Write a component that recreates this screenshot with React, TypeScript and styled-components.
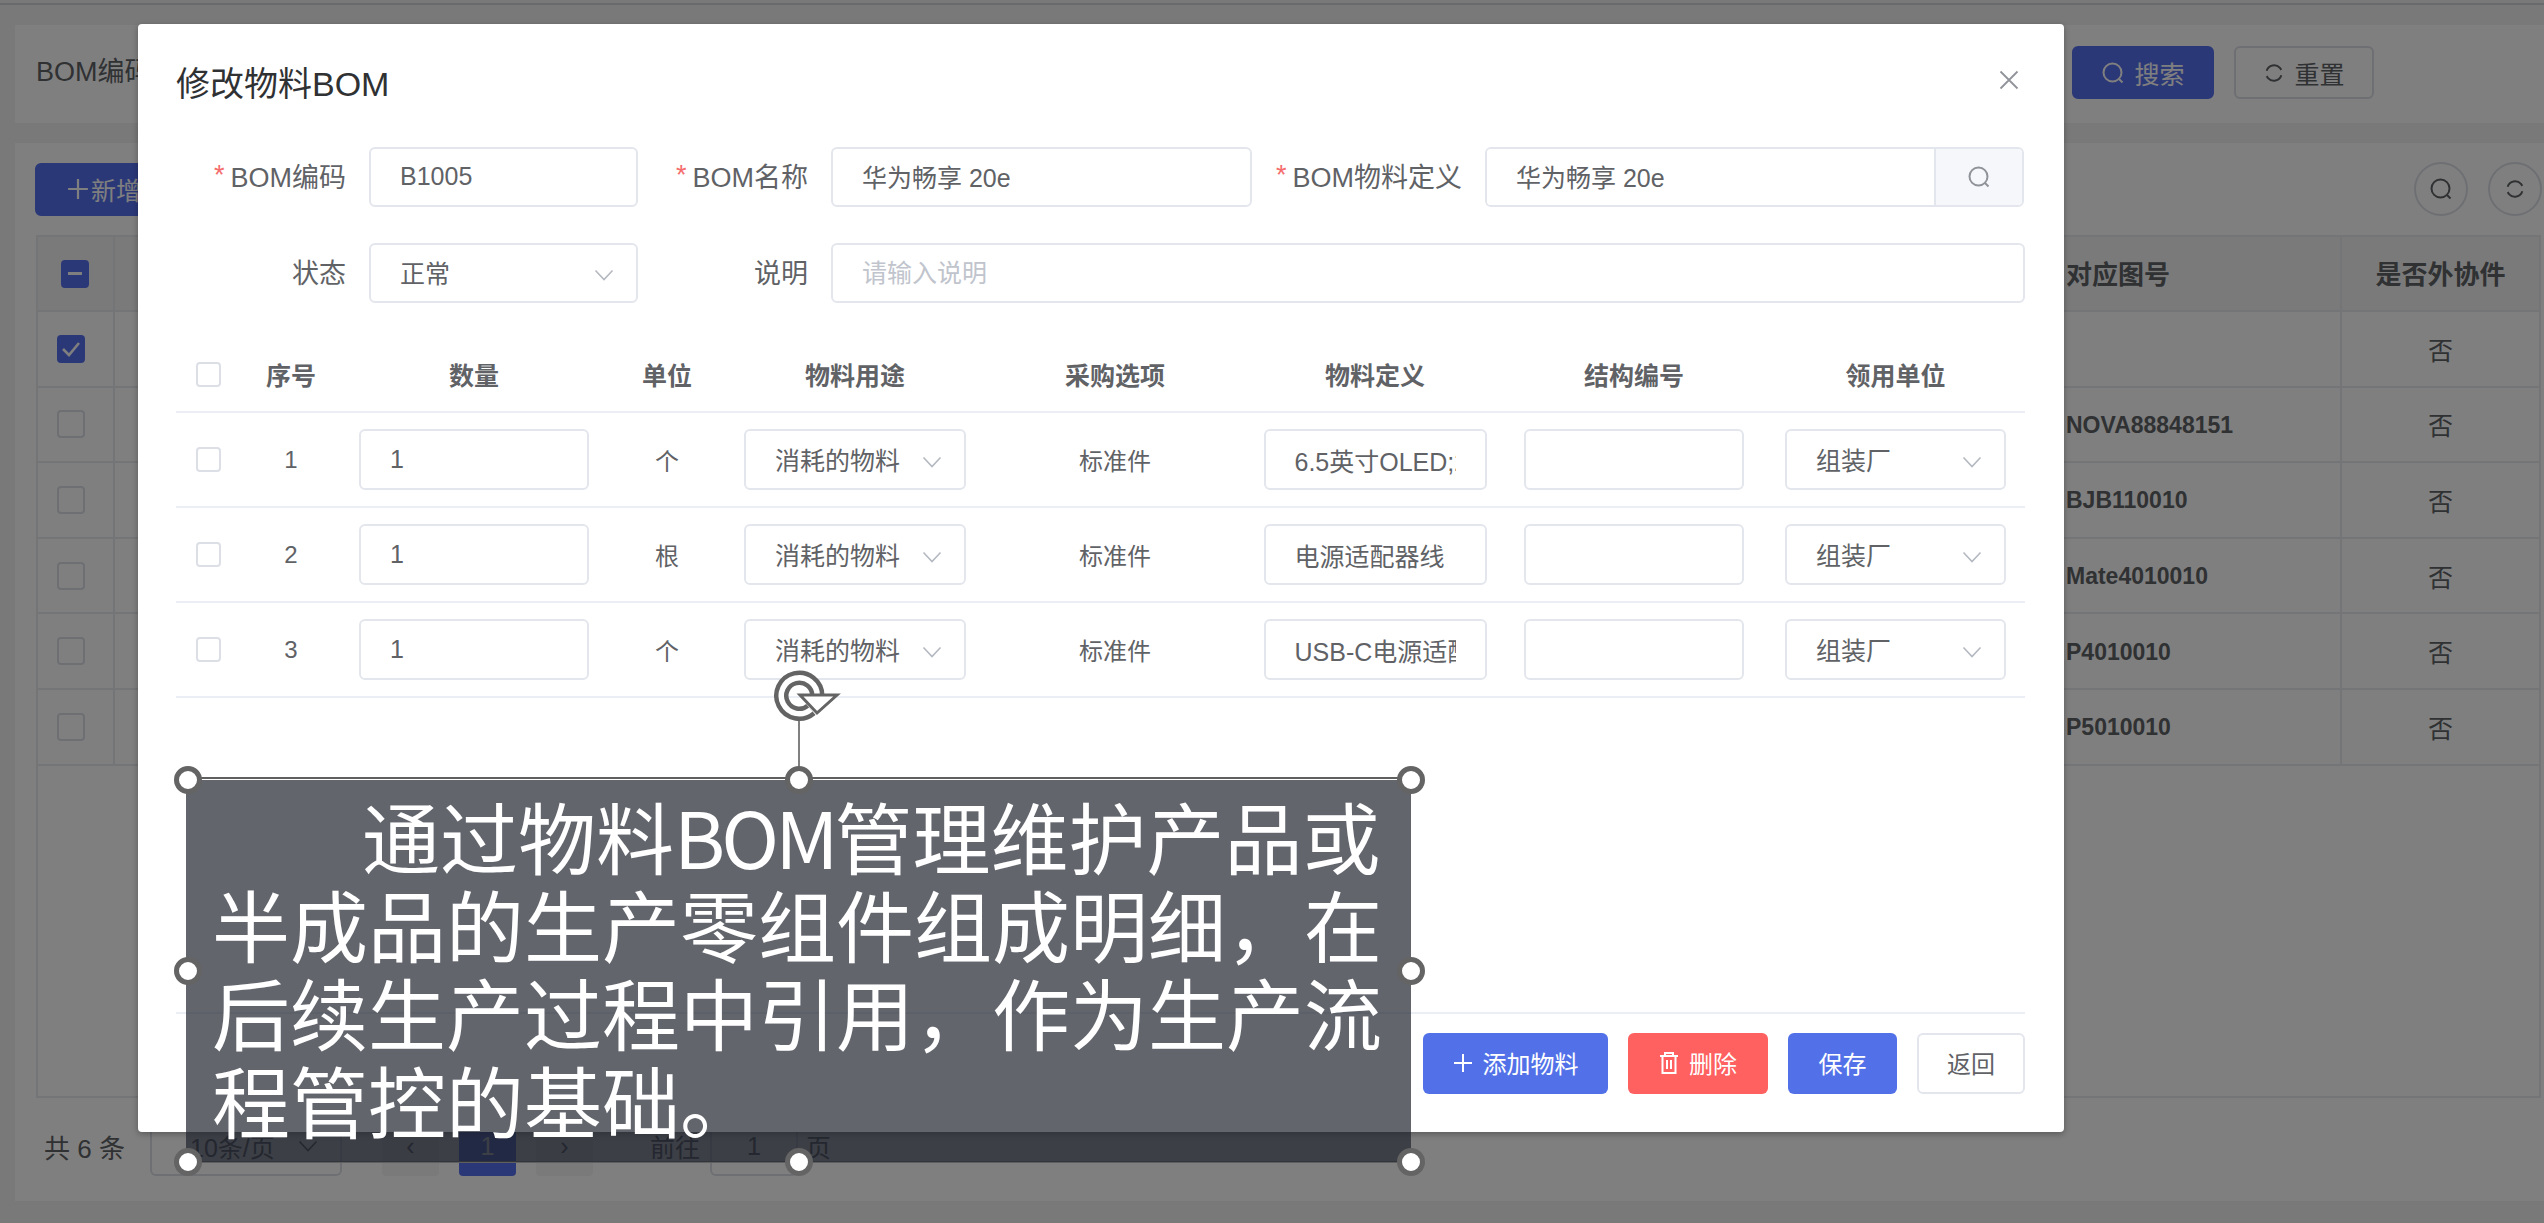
import React from "react";
import styled, { createGlobalStyle } from "styled-components";

const Global = createGlobalStyle`
  html, body { margin: 0; padding: 0; background: #f4f4f4; overflow: hidden; }
  * { box-sizing: border-box; }
  body, input { font-family: "Liberation Sans", "Noto Sans CJK SC", sans-serif; }
`;

const Page = styled.div`
  position: relative; width: 2544px; height: 1223px; overflow: hidden;
  background: #f3f3f3; padding: 25px 0 0 15px; color: #606266; font-size: 25px;
`;
const TopLine = styled.div`
  position: absolute; left: 0; right: 0; top: 0; height: 5px; border-bottom: 2px solid #d2d4d8;
`;
const SearchPanel = styled.section`
  height: 98px; background: #fff; padding: 21px 170px 0 21px;
  display: flex; justify-content: space-between; align-items: flex-start;
`;
const SearchLabel = styled.span`
  font-size: 27px; line-height: 53px; color: #606266;
`;
const ActionRow = styled.div`display: flex; gap: 20px;`;
const PageBtn = styled.div<{ $primary?: boolean; $w: number }>`
  width: ${p => p.$w}px; height: 53px; border-radius: 6px; display: flex; align-items: center;
  justify-content: center; gap: 9px; font-size: 25px;
  background: ${p => (p.$primary ? "#5670f0" : "#fff")};
  color: ${p => (p.$primary ? "#fff" : "#606266")};
  border: 2px solid ${p => (p.$primary ? "#5670f0" : "#dcdfe6")};
`;
const TablePanel = styled.section`
  height: 1058px; margin-top: 20px; background: #fff; padding: 19px 3px 0 20px;
`;
const Toolbar = styled.div`
  height: 54px; display: flex; justify-content: space-between; align-items: center;
`;
const NewBtn = styled(PageBtn)`justify-content: flex-start; padding-left: 30px; gap: 2px;`;
const RoundRow = styled.div`display: flex; gap: 20px; margin-right: -1px;`;
const RoundBtn = styled.div`
  width: 54px; height: 54px; border-radius: 50%; border: 2px solid #dcdfe6;
  display: flex; align-items: center; justify-content: center; color: #606266;
`;
const DataTable = styled.div`
  margin: 19px 0 0 1px; height: 863px; border: 2px solid #e8eaee;
`;
const DataRow = styled.div<{ $head?: boolean }>`
  display: grid; grid-template-columns: 77px 1fr 286px 197px;
  height: ${p => (p.$head ? "75px" : "75.6px")}; border-bottom: 2px solid #e8eaee;
  background: ${p => (p.$head ? "#f5f5f6" : "#fff")};
  font-weight: ${p => (p.$head ? 700 : 400)};
`;
const DataCell = styled.div<{ $center?: boolean; $mono?: boolean; $head?: boolean }>`
  display: flex; align-items: center; border-right: 2px solid #e8eaee; padding-left: 10px;
  padding-top: ${p => (p.$mono ? 2 : 0)}px; padding-bottom: ${p => (p.$head ? 3 : 0)}px;
  justify-content: ${p => (p.$center ? "center" : "flex-start")};
  font-size: ${p => (p.$mono ? 23 : p.$head ? 26 : 25)}px; font-weight: ${p => (p.$mono ? 700 : "inherit")};
  color: #606266;
  &:last-child { border-right: 0; padding-left: 0; }
`;
const CheckCell = styled(DataCell)`padding-left: 19px; justify-content: flex-start;`;
const HeadCheckCell = styled(DataCell)`padding-left: 23px; justify-content: flex-start;`;
const BigCheck = styled.span<{ $on?: boolean }>`
  width: 28px; height: 28px; border-radius: 4px; display: flex; align-items: center; justify-content: center;
  background: ${p => (p.$on ? "#5670f0" : "#fff")};
  border: 2px solid ${p => (p.$on ? "#5670f0" : "#dcdfe6")};
`;
const Minus = styled.i`width: 14px; height: 3px; background: #fff; display: block;`;
const Pagination = styled.div`
  margin-top: 18px; margin-left: 9px; height: 60px; display: flex; align-items: center; font-size: 25px; color: #606266;
`;
const PageTotal = styled.span`width: 106px; flex: none; font-size: 26px;`;
const PageSize = styled.div`
  width: 192px; height: 60px; border: 2px solid #dcdfe6; border-radius: 6px; margin-right: 40px;
  display: flex; align-items: center; justify-content: space-between; padding: 0 22px 0 38px;
`;
const PageCell = styled.div<{ $on?: boolean }>`
  width: 57px; height: 60px; margin-right: 20px; border-radius: 4px; display: flex;
  align-items: center; justify-content: center;
  background: ${p => (p.$on ? "#5670f0" : "#f4f4f5")}; color: ${p => (p.$on ? "#fff" : "#606266")};
`;
const GoLabel = styled.span`margin-left: 37px; width: 60px;`;
const GoBox = styled.div`
  width: 88px; height: 60px; border: 2px solid #dcdfe6; border-radius: 6px; margin-right: 8px;
  display: flex; align-items: center; justify-content: center;
`;

const Mask = styled.div`position: absolute; inset: 0; background: rgba(0, 0, 0, 0.5);`;
const Modal = styled.div`
  position: absolute; left: 138px; top: 24px; width: 1926px; height: 1108px; background: #fff;
  border-radius: 4px; box-shadow: 0 2px 6px rgba(0, 0, 0, .3); padding: 0 39px 0 38px;
  display: flex; flex-direction: column; color: #606266;
`;
const ModalHead = styled.header`
  height: 123px; padding-top: 39px; display: flex; justify-content: space-between; align-items: flex-start;
`;
const Title = styled.h2`
  margin: 0; font-size: 34px; line-height: 42px; font-weight: 400; color: #303133;
`;
const CloseBtn = styled.span`margin: 7px 6px 0 0; color: #909399; display: flex;`;
const FormGrid = styled.div`
  display: grid; grid-template-columns: 193px 269px 193px 421px 233px 1fr;
  grid-auto-rows: 60px; row-gap: 36px;
`;
const Label = styled.label`
  display: flex; align-items: center; justify-content: flex-end; padding: 0 23px 3px 0; font-size: 27px; white-space: nowrap;
`;
const Star = styled.span`color: #f56c6c; margin-right: 6px;`;
const TextInput = styled.input`
  width: 100%; height: 60px; border: 2px solid #e3e6ec; border-radius: 6px; padding: 0 29px;
  font-size: 25px; color: #606266; outline: none; background: #fff; min-width: 0;
  &::placeholder { color: #c0c4cc; }
`;
const HeadInput = styled(TextInput)`padding-bottom: 2px;`;
const WideField = styled.div`grid-column: span 3;`;
const Group = styled.div`
  display: flex; height: 60px; border: 2px solid #e3e6ec; border-radius: 6px; overflow: hidden; margin-right: 1px;
`;
const GroupInput = styled(HeadInput)`border: 0; height: 56px; flex: 1; border-radius: 0;`;
const GroupAddon = styled.div`
  width: 88px; background: #f5f7fa; border-left: 2px solid #e3e6ec; display: flex; align-items: center;
  justify-content: center; color: #909399;
`;
const SelectBox = styled.div<{ $w?: number; $h?: number }>`
  width: ${p => (p.$w ? p.$w + "px" : "100%")}; height: ${p => p.$h ?? 60}px; border: 2px solid #e3e6ec; border-radius: 6px;
  display: flex; align-items: center; justify-content: space-between; padding: 0 22px 0 29px;
  font-size: 25px; color: #606266; background: #fff; white-space: nowrap;
`;
const SelectText = styled.span`margin-top: -2px;`;
const Chevron = styled.span`display: flex; color: #b4b8c0; margin-top: 4px;`;

const GRID = "64px 102px 264px 122px 254px 266px 254px 264px 259px";
const ItemTable = styled.div`margin-top: 35px;`;
const ItemHead = styled.div`
  display: grid; grid-template-columns: ${GRID}; height: 75px; border-bottom: 2px solid #ebeef5;
  font-weight: 700; font-size: 25px; color: #606266;
`;
const ItemRow = styled.div`
  display: grid; grid-template-columns: ${GRID}; height: 95px; border-bottom: 2px solid #ebeef5; font-size: 24px;
`;
const ItemCell = styled.div`display: flex; align-items: center; justify-content: center; min-width: 0;`;
const HeadText = styled.span`margin-top: -2px;`;
const CellInput = styled(TextInput)<{ $w: number }>`width: ${p => p.$w}px; height: 61px; flex: none;`;
const SmallCheck = styled.span`
  width: 25px; height: 25px; border: 2px solid #dcdfe6; border-radius: 4px; background: #fff; display: block;
`;
const ModalBody = styled.div`flex: 1;`;
const ModalFoot = styled.footer`
  height: 120px; border-top: 2px solid #ebeef5; padding-top: 19px; display: flex; justify-content: flex-end; gap: 20px;
`;
const FootBtn = styled.div<{ $kind: "blue" | "red" | "plain"; $w: number }>`
  width: ${p => p.$w}px; height: 61px; border-radius: 6px; display: flex; align-items: center; justify-content: center;
  gap: 10px; font-size: 24px; padding-bottom: 2px;
  background: ${p => (p.$kind === "blue" ? "#5271e8" : p.$kind === "red" ? "#ff6060" : "#fff")};
  color: ${p => (p.$kind === "plain" ? "#606266" : "#fff")};
  border: 2px solid ${p => (p.$kind === "plain" ? "#e3e6ec" : "transparent")};
`;

const CaptionBox = styled.div`
  position: absolute; left: 186px; top: 777px; width: 1225px; height: 386px;
  border-top: 2px solid #5f5f5f; border-bottom: 2px solid #5f5f5f;
`;
const CaptionFill = styled.div`
  height: 100%; margin-top: 1px; background: rgba(32, 36, 46, 0.7); padding: 11px 17px 0 26px;
  font-family: "Noto Sans CJK SC", sans-serif; font-size: 78px; line-height: 88px; color: #fff; text-indent: 150px;
`;
const BomRun = styled.span`letter-spacing: -4px;`;
const Handle = styled.i<{ $x: "l" | "c" | "r"; $y: "t" | "m" | "b" }>`
  position: absolute; width: 28px; height: 28px; border-radius: 50%; background: #fff; border: 5px solid #646464;
  left: ${p => (p.$x === "l" ? "-12px" : p.$x === "c" ? "599px" : "1211px")};
  top: ${p => (p.$y === "t" ? "-13px" : p.$y === "m" ? "178px" : "369px")};
`;
const RotateLine = styled.i`
  position: absolute; left: 612px; top: -58px; width: 2px; height: 46px; background: #808080;
`;
const RotateIcon = styled.svg`position: absolute; left: 587px; top: -110px;`;

const Search = ({ s = 24 }: { s?: number }) => (
  <svg width={s} height={s} viewBox="0 0 24 24" fill="none" stroke="currentColor" strokeWidth="2">
    <circle cx="11.5" cy="11.5" r="9" />
    <path d="M18 18l3.5 3.5" />
  </svg>
);
const Refresh = ({ s = 22 }: { s?: number }) => (
  <svg width={s} height={s} viewBox="0 0 24 24" fill="none" stroke="currentColor" strokeWidth="2.2">
    <path d="M4 9.5A8.5 8.5 0 0 1 18.5 6.5l1.5 2" />
    <path d="M20 14.5A8.5 8.5 0 0 1 5.5 17.5L4 15.5" />
  </svg>
);
const Down = ({ s = 20 }: { s?: number }) => (
  <svg width={s} height={s * 0.6} viewBox="0 0 20 12" fill="none" stroke="currentColor" strokeWidth="1.6">
    <path d="M1.5 1.5L10 10.5 18.5 1.5" />
  </svg>
);
const Plus = ({ s = 20, w = 2 }: { s?: number; w?: number }) => (
  <svg width={s} height={s} viewBox="0 0 20 20" fill="none" stroke="currentColor" strokeWidth={w}>
    <path d="M10 1v18M1 10h18" />
  </svg>
);
const Trash = () => (
  <svg width="20" height="24" viewBox="0 0 20 24" fill="none" stroke="currentColor" strokeWidth="2">
    <path d="M1 5h18M6 5V2h8v3M3.5 5v17h13V5M8 9v9M12 9v9" />
  </svg>
);
const Close = () => (
  <svg width="20" height="20" viewBox="0 0 20 20" fill="none" stroke="currentColor" strokeWidth="1.8">
    <path d="M1.5 1.5l17 17M18.5 1.5l-17 17" />
  </svg>
);
const Check = () => (
  <svg width="20" height="16" viewBox="0 0 20 16" fill="none" stroke="#fff" strokeWidth="2.6">
    <path d="M2 8l6 6L18 2" />
  </svg>
);

const bgRows = ["", "NOVA88848151", "BJB110010", "Mate4010010", "P4010010", "P5010010"];
const items = [
  { n: 1, unit: "个", def: "6.5英寸OLED;2340x1080" },
  { n: 2, unit: "根", def: "电源适配器线" },
  { n: 3, unit: "个", def: "USB-C电源适配器" },
];

export default function App() {
  return (
    <Page>
      <Global />
      <TopLine />
      <SearchPanel>
        <SearchLabel>BOM编码</SearchLabel>
        <ActionRow>
          <PageBtn $primary $w={142}><Search />搜索</PageBtn>
          <PageBtn $w={140}><Refresh />重置</PageBtn>
        </ActionRow>
      </SearchPanel>
      <TablePanel>
        <Toolbar>
          <NewBtn $primary $w={180}><Plus s={22} />新增</NewBtn>
          <RoundRow>
            <RoundBtn><Search /></RoundBtn>
            <RoundBtn><Refresh /></RoundBtn>
          </RoundRow>
        </Toolbar>
        <DataTable>
          <DataRow $head>
            <HeadCheckCell><BigCheck $on><Minus /></BigCheck></HeadCheckCell>
            <DataCell />
            <DataCell $head>对应图号</DataCell>
            <DataCell $head $center>是否外协件</DataCell>
          </DataRow>
          {bgRows.map((code, i) => (
            <DataRow key={i}>
              <CheckCell><BigCheck $on={i === 0}>{i === 0 && <Check />}</BigCheck></CheckCell>
              <DataCell />
              <DataCell $mono>{code}</DataCell>
              <DataCell $center>否</DataCell>
            </DataRow>
          ))}
        </DataTable>
        <Pagination>
          <PageTotal>共 6 条</PageTotal>
          <PageSize>10条/页<Down /></PageSize>
          <PageCell>‹</PageCell>
          <PageCell $on>1</PageCell>
          <PageCell>›</PageCell>
          <GoLabel>前往</GoLabel>
          <GoBox>1</GoBox>
          <span>页</span>
        </Pagination>
      </TablePanel>

      <Mask />

      <Modal>
        <ModalHead>
          <Title>修改物料BOM</Title>
          <CloseBtn><Close /></CloseBtn>
        </ModalHead>
        <FormGrid>
          <Label><Star>*</Star>BOM编码</Label>
          <HeadInput readOnly value="B1005" />
          <Label><Star>*</Star>BOM名称</Label>
          <HeadInput readOnly value="华为畅享 20e" />
          <Label><Star>*</Star>BOM物料定义</Label>
          <Group>
            <GroupInput readOnly value="华为畅享 20e" />
            <GroupAddon><Search /></GroupAddon>
          </Group>
          <Label>状态</Label>
          <SelectBox><SelectText>正常</SelectText><Chevron><Down /></Chevron></SelectBox>
          <Label>说明</Label>
          <WideField><TextInput readOnly placeholder="请输入说明" /></WideField>
        </FormGrid>
        <ItemTable>
          <ItemHead>
            <ItemCell><SmallCheck /></ItemCell>
            <ItemCell><HeadText>序号</HeadText></ItemCell>
            <ItemCell><HeadText>数量</HeadText></ItemCell>
            <ItemCell><HeadText>单位</HeadText></ItemCell>
            <ItemCell><HeadText>物料用途</HeadText></ItemCell>
            <ItemCell><HeadText>采购选项</HeadText></ItemCell>
            <ItemCell><HeadText>物料定义</HeadText></ItemCell>
            <ItemCell><HeadText>结构编号</HeadText></ItemCell>
            <ItemCell><HeadText>领用单位</HeadText></ItemCell>
          </ItemHead>
          {items.map(it => (
            <ItemRow key={it.n}>
              <ItemCell><SmallCheck /></ItemCell>
              <ItemCell>{it.n}</ItemCell>
              <ItemCell><CellInput $w={230} readOnly value="1" /></ItemCell>
              <ItemCell>{it.unit}</ItemCell>
              <ItemCell><SelectBox $w={222} $h={61}><SelectText>消耗的物料</SelectText><Chevron><Down /></Chevron></SelectBox></ItemCell>
              <ItemCell>标准件</ItemCell>
              <ItemCell><CellInput $w={223} readOnly value={it.def} /></ItemCell>
              <ItemCell><CellInput $w={220} readOnly value="" /></ItemCell>
              <ItemCell><SelectBox $w={221} $h={61}><SelectText>组装厂</SelectText><Chevron><Down /></Chevron></SelectBox></ItemCell>
            </ItemRow>
          ))}
        </ItemTable>
        <ModalBody />
        <ModalFoot>
          <FootBtn $kind="blue" $w={185}><Plus s={20} />添加物料</FootBtn>
          <FootBtn $kind="red" $w={140}><Trash />删除</FootBtn>
          <FootBtn $kind="blue" $w={109}>保存</FootBtn>
          <FootBtn $kind="plain" $w={108}>返回</FootBtn>
        </ModalFoot>
      </Modal>

      <CaptionBox>
        <CaptionFill>通过物料<BomRun>BOM</BomRun>管理维护产品或半成品的生产零组件组成明细，在后续生产过程中引用，作为生产流程管控的基础。</CaptionFill>
        <RotateLine />
        <RotateIcon width="70" height="56" viewBox="0 0 70 56" fill="none">
          <path d="M37.9 40.5A18 18 0 1 1 44.3 26.7" stroke="#646464" strokeWidth="14.5" />
          <path d="M37.9 40.5A18 18 0 1 1 44.3 26.7" stroke="#fff" strokeWidth="5.5" />
          <path d="M27 26H64L44 44Z" fill="#fff" stroke="#646464" strokeWidth="3" />
        </RotateIcon>
        <Handle $x="l" $y="t" /><Handle $x="c" $y="t" /><Handle $x="r" $y="t" />
        <Handle $x="l" $y="m" /><Handle $x="r" $y="m" />
        <Handle $x="l" $y="b" /><Handle $x="c" $y="b" /><Handle $x="r" $y="b" />
      </CaptionBox>
    </Page>
  );
}
